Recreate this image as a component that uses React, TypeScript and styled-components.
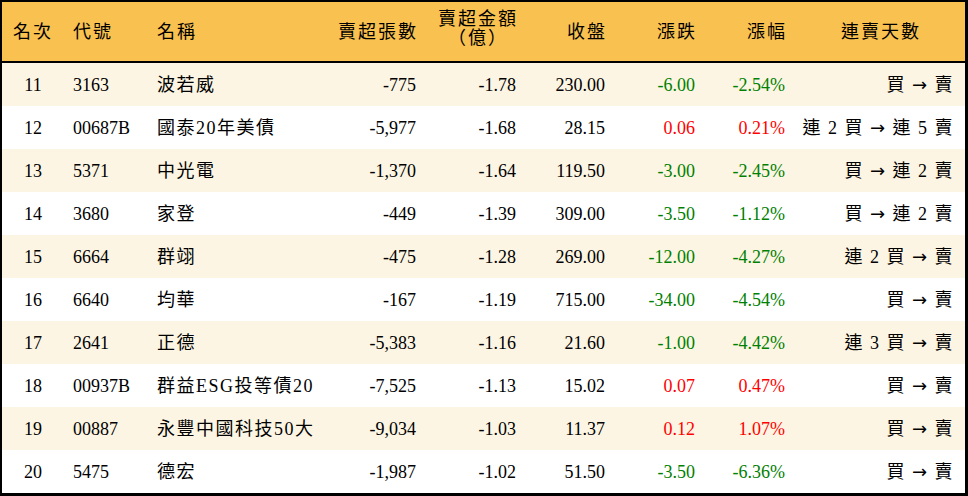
import * as React from 'react';
import styled, { createGlobalStyle } from 'styled-components';

interface RowData {
  rank: number;
  code: string;
  name: string;
  volume: string;
  amount: string;
  close: string;
  change: string;
  pct: string;
  streak: string;
}

const rows: Array<RowData> = [
  { rank: 11, code: '3163', name: '波若威', volume: '-775', amount: '-1.78', close: '230.00', change: '-6.00', pct: '-2.54%', streak: '買 → 賣' },
  { rank: 12, code: '00687B', name: '國泰20年美債', volume: '-5,977', amount: '-1.68', close: '28.15', change: '0.06', pct: '0.21%', streak: '連 2 買 → 連 5 賣' },
  { rank: 13, code: '5371', name: '中光電', volume: '-1,370', amount: '-1.64', close: '119.50', change: '-3.00', pct: '-2.45%', streak: '買 → 連 2 賣' },
  { rank: 14, code: '3680', name: '家登', volume: '-449', amount: '-1.39', close: '309.00', change: '-3.50', pct: '-1.12%', streak: '買 → 連 2 賣' },
  { rank: 15, code: '6664', name: '群翊', volume: '-475', amount: '-1.28', close: '269.00', change: '-12.00', pct: '-4.27%', streak: '連 2 買 → 賣' },
  { rank: 16, code: '6640', name: '均華', volume: '-167', amount: '-1.19', close: '715.00', change: '-34.00', pct: '-4.54%', streak: '買 → 賣' },
  { rank: 17, code: '2641', name: '正德', volume: '-5,383', amount: '-1.16', close: '21.60', change: '-1.00', pct: '-4.42%', streak: '連 3 買 → 賣' },
  { rank: 18, code: '00937B', name: '群益ESG投等債20', volume: '-7,525', amount: '-1.13', close: '15.02', change: '0.07', pct: '0.47%', streak: '買 → 賣' },
  { rank: 19, code: '00887', name: '永豐中國科技50大', volume: '-9,034', amount: '-1.03', close: '11.37', change: '0.12', pct: '1.07%', streak: '買 → 賣' },
  { rank: 20, code: '5475', name: '德宏', volume: '-1,987', amount: '-1.02', close: '51.50', change: '-3.50', pct: '-6.36%', streak: '買 → 賣' },
];

const GlobalStyle = createGlobalStyle`
  body {
    margin: 0;
    background: #fff;
    font-family: "Liberation Serif", "Noto Sans CJK TC", serif;
  }
`;

const COLUMNS = '62px 85px 181px 94px 100px 89px 90px 90px 172px';

const Table = styled.div`
  width: 968px;
  box-sizing: border-box;
  border: 2px solid #000;
  border-right-width: 3px;
  border-bottom-width: 3px;
  color: #000;
  font-size: 18px;
`;

const HeaderRow = styled.div`
  display: grid;
  grid-template-columns: ${COLUMNS};
  height: 59px;
  background: #f9c150;
  border-bottom: 2px solid #000;
  align-items: center;
`;

const BodyRow = styled.div<{ $alt: boolean }>`
  display: grid;
  grid-template-columns: ${COLUMNS};
  height: 43px;
  align-items: center;
  background: ${p => (p.$alt ? '#fdf5e3' : '#fff')};
`;

type Align = 'left' | 'center' | 'right';

const Cell = styled.div<{ $align: Align; $pl?: number; $pr?: number; $color?: string; $spacing?: number }>`
  text-align: ${p => p.$align};
  padding-left: ${p => p.$pl ?? 0}px;
  padding-right: ${p => p.$pr ?? 0}px;
  color: ${p => p.$color ?? '#000'};
  letter-spacing: ${p => p.$spacing ?? 0}px;
  white-space: nowrap;
  line-height: 22px;
`;

const HeadCell = styled(Cell)`
  letter-spacing: 2px;
`;

const Stacked = styled.span`
  display: inline-block;
  text-align: center;
  line-height: 19px;
  margin-top: -4px;
`;

const Arrow = styled.span`
  font-family: "DejaVu Sans", sans-serif;
  font-size: 18px;
`;

const trend = (v: string) => (v.startsWith('-') ? '#008000' : '#ff0000');

const Streak = ({ text }: { text: string }) => {
  const [from, to] = text.split('→');
  return (
    <>
      {from}<Arrow>→</Arrow>{to}
    </>
  );
};

const App = () => {
  return (
    <>
      <GlobalStyle />
      <Table>
        <HeaderRow>
          <HeadCell $align="center">名次</HeadCell>
          <HeadCell $align="left" $pl={9}>代號</HeadCell>
          <HeadCell $align="left" $pl={8}>名稱</HeadCell>
          <HeadCell $align="right" $pr={6}>賣超張數</HeadCell>
          <HeadCell $align="right" $pr={6}>
            <Stacked>賣超金額<br />（億）</Stacked>
          </HeadCell>
          <HeadCell $align="right" $pr={6}>收盤</HeadCell>
          <HeadCell $align="right" $pr={6}>漲跌</HeadCell>
          <HeadCell $align="right" $pr={6}>漲幅</HeadCell>
          <HeadCell $align="center" $pl={4}>連賣天數</HeadCell>
        </HeaderRow>
        {rows.map((r, i) => (
          <BodyRow key={r.rank} $alt={i % 2 === 0}>
            <Cell $align="center">{r.rank}</Cell>
            <Cell $align="left" $pl={9}>{r.code}</Cell>
            <Cell $align="left" $pl={8} $spacing={1.5}>{r.name}</Cell>
            <Cell $align="right" $pr={8}>{r.volume}</Cell>
            <Cell $align="right" $pr={8}>{r.amount}</Cell>
            <Cell $align="right" $pr={8}>{r.close}</Cell>
            <Cell $align="right" $pr={8} $color={trend(r.change)}>{r.change}</Cell>
            <Cell $align="right" $pr={8} $color={trend(r.pct)}>{r.pct}</Cell>
            <Cell $align="right" $pr={11} $spacing={1.5}><Streak text={r.streak} /></Cell>
          </BodyRow>
        ))}
      </Table>
    </>
  );
};

export default App;
